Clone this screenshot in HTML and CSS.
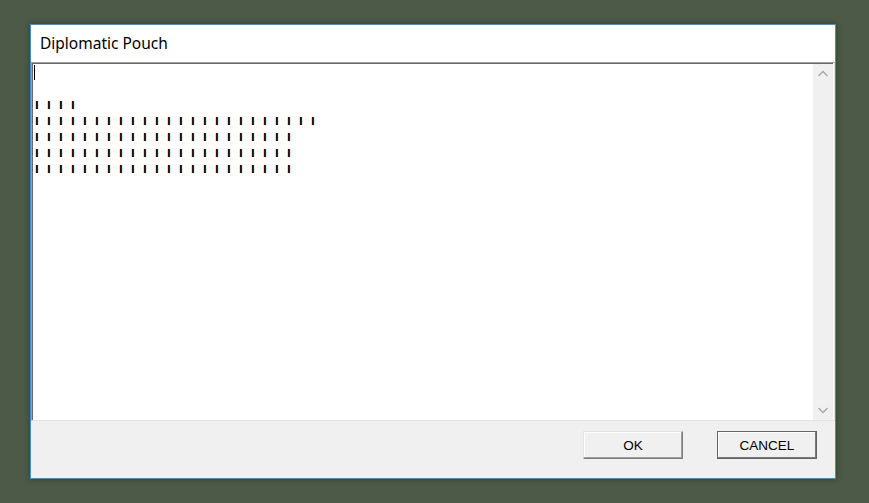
FILE: index.html
```html
<!DOCTYPE html>
<html>
<head>
<meta charset="utf-8">
<title>Diplomatic Pouch</title>
<link rel="stylesheet" href="styles.css">
</head>
<body>
<div class="window">
  <div class="titlebar">Diplomatic Pouch</div>
  <div class="edit">
    <div class="text">
      <div class="line"><span class="caret"></span></div>
      <div class="line"></div>
      <div class="line bars">llll</div>
      <div class="line bars">llllllllllllllllllllllll</div>
      <div class="line bars">llllllllllllllllllllll</div>
      <div class="line bars">llllllllllllllllllllll</div>
      <div class="line bars">llllllllllllllllllllll</div>
    </div>
    <div class="scrollbar">
      <svg class="arrow" width="20" height="20" viewBox="0 0 20 20"><path d="M5.5 12 L10 7.5 L14.5 12" fill="none" stroke="#a6a6a6" stroke-width="1.3"/></svg>
      <svg class="arrow" width="20" height="20" viewBox="0 0 20 20"><path d="M5.5 8 L10 12.5 L14.5 8" fill="none" stroke="#a6a6a6" stroke-width="1.3"/></svg>
    </div>
  </div>
  <div class="footer">
    <button class="btn">OK</button>
    <button class="btn default">CANCEL</button>
  </div>
</div>
</body>
</html>
```
FILE: styles.css
```css
html, body {
  margin: 0;
  padding: 0;
}
body {
  background: #4d5a48;
  width: 869px;
  height: 503px;
  overflow: hidden;
  padding-top: 24px;
  padding-left: 30px;
  box-sizing: border-box;
}
.window {
  width: 806px;
  height: 455px;
  box-sizing: border-box;
  border: 1px solid #3d8fd1;
  background: #f0f0f0;
  display: flex;
  flex-direction: column;
  box-shadow: 0 0 6px rgba(0,0,0,0.35);
}
.titlebar {
  height: 37px;
  flex: none;
  background: #ffffff;
  font-family: "Noto Sans", "Open Sans", sans-serif;
  font-size: 15.5px;
  color: #000;
  padding-left: 9px;
  line-height: 37px;
  box-sizing: border-box;
}
.edit {
  height: 359px;
  flex: none;
  display: flex;
  box-sizing: border-box;
  border-top: 1px solid #a0a0a0;
  border-left: 1px solid #a0a0a0;
  border-right: 1px solid #e3e3e3;
  border-bottom: 1px solid #e3e3e3;
  background: #fff;
}
.text {
  flex: 1;
  border-top: 1px solid #696969;
  border-left: 1px solid #696969;
  padding-left: 2px;
  padding-top: 0;
}
.line {
  height: 16px;
  line-height: 16px;
  font-family: "DejaVu Sans", sans-serif;
  font-weight: bold;
  font-size: 11px;
  color: #000;
  white-space: pre;
}
.bars {
  letter-spacing: 8.23px;
  line-height: 13px;
  padding-top: 3px;
  box-sizing: border-box;
}
.caret {
  display: inline-block;
  width: 1px;
  height: 15px;
  background: #000;
  margin-left: -1px;
  margin-top: 1px;
  vertical-align: top;
}
.scrollbar {
  width: 20px;
  flex: none;
  background: #f0f0f0;
  border-top: 1px solid #696969;
  display: flex;
  flex-direction: column;
  justify-content: space-between;
  margin-right: 1px;
}
.arrow {
  display: block;
  width: 20px;
  height: 20px;
}
.footer {
  flex: 1;
  display: flex;
  justify-content: flex-end;
  align-items: flex-start;
  gap: 34px;
  padding-top: 10px;
  padding-right: 18px;
  background: #f0f0f0;
}
.btn {
  width: 100px;
  height: 28px;
  flex: none;
  box-sizing: border-box;
  background: #f0f0f0;
  font-family: "Liberation Sans", Arial, sans-serif;
  font-size: 13.5px;
  color: #000;
  border-top: 1px solid #e3e3e3;
  border-left: 1px solid #e3e3e3;
  border-right: 1px solid #7a7a7a;
  border-bottom: 1px solid #7a7a7a;
  box-shadow: inset -1px -1px 0 #a0a0a0, inset 1px 1px 0 #ffffff;
  padding: 0;
  margin: 0;
}
.btn.default {
  border: 1px solid #646464;
  box-shadow: inset -1px -1px 0 #7a7a7a, inset 1px 1px 0 #ffffff;
}
```
